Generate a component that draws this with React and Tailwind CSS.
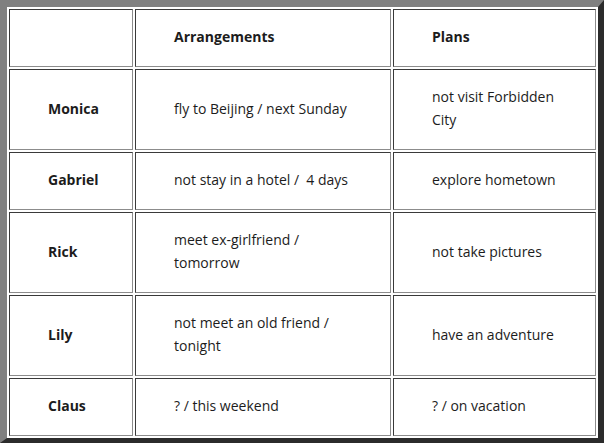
import React from 'react';

const rows = [
    { name: 'Monica', arrangement: 'fly to Beijing / next Sunday', plan: 'not visit Forbidden City' },
    { name: 'Gabriel', arrangement: 'not stay in a hotel /\u00a0 4 days', plan: 'explore hometown' },
    { name: 'Rick', arrangement: 'meet ex-girlfriend / tomorrow', plan: 'not take pictures' },
    { name: 'Lily', arrangement: 'not meet an old friend / tonight', plan: 'have an adventure' },
    { name: 'Claus', arrangement: '? / this weekend', plan: '? / on vacation' },
];

const cell =
    'border border-t-[#3a3a3a] border-l-[#3a3a3a] border-b-[#8c8c8c] border-r-[#8c8c8c] pl-[38px] pr-[36px] pt-[15px] pb-[18px] align-middle text-left';

export default function App() {
    return (
        <div className="w-[604px] h-[443px] bg-white" style={{ fontFamily: '"Open Sans", "Noto Sans", sans-serif' }}>
            <table className="w-[604px] table-fixed border-separate border-spacing-[2px] bg-white border-solid border-t-[7px] border-l-[7px] border-r-[6px] border-b-[5px] border-t-[#808080] border-l-[#808080] border-r-[#2b2b2b] border-b-[#2b2b2b] text-[14px] leading-[23px] text-[#1c1c1c]">
                <colgroup>
                    <col className="w-[124px]" />
                    <col className="w-[256px]" />
                    <col className="w-[203px]" />
                </colgroup>
                <thead>
                    <tr>
                        <th className={cell}></th>
                        <th className={`${cell} font-bold`}>Arrangements</th>
                        <th className={`${cell} font-bold`}>Plans</th>
                    </tr>
                </thead>
                <tbody>
                    {rows.map((row) => (
                        <tr key={row.name}>
                            <td className={`${cell} font-bold`}>{row.name}</td>
                            <td className={cell}>{row.arrangement}</td>
                            <td className={cell}>{row.plan}</td>
                        </tr>
                    ))}
                </tbody>
            </table>
        </div>
    );
}
